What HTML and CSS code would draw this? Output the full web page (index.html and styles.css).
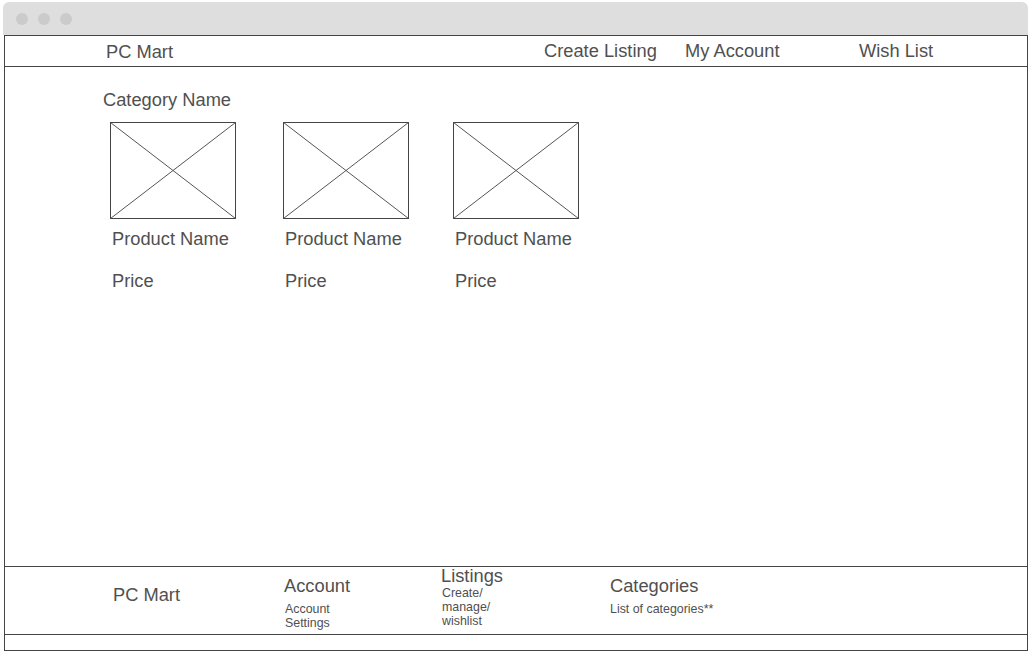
FILE: index.html
```html
<!DOCTYPE html>
<html lang="en">

<head>
    <meta charset="UTF-8">
    <meta name="viewport" content="width=device-width, initial-scale=1.0">
    <title>PC Mart</title>
    <link rel="stylesheet" href="styles.css">
</head>

<body>
    <div class="window">
        <div class="chrome">
            <span class="dot"></span>
            <span class="dot"></span>
            <span class="dot"></span>
        </div>
        <div class="frame">
            <div class="header">
                <a href="JavaScript:" class="logo">PC Mart</a>
                <div class="nav">
                    <a href="JavaScript:" class="nav_create">Create Listing</a>
                    <a href="JavaScript:" class="nav_account">My Account</a>
                    <a href="JavaScript:" class="nav_wish">Wish List</a>
                </div>
            </div>

            <div class="main">
                <h2 class="cat_name">Category Name</h2>
                <div class="products">
                    <div class="product">
                        <svg class="pic" width="126" height="97" viewBox="0 0 126 97">
                            <rect x="0.5" y="0.5" width="125" height="96" />
                            <line x1="0.5" y1="0.5" x2="125.5" y2="96.5" />
                            <line x1="125.5" y1="0.5" x2="0.5" y2="96.5" />
                        </svg>
                        <p class="p_name">Product Name</p>
                        <p class="p_price">Price</p>
                    </div>
                    <div class="product">
                        <svg class="pic" width="126" height="97" viewBox="0 0 126 97">
                            <rect x="0.5" y="0.5" width="125" height="96" />
                            <line x1="0.5" y1="0.5" x2="125.5" y2="96.5" />
                            <line x1="125.5" y1="0.5" x2="0.5" y2="96.5" />
                        </svg>
                        <p class="p_name">Product Name</p>
                        <p class="p_price">Price</p>
                    </div>
                    <div class="product">
                        <svg class="pic" width="126" height="97" viewBox="0 0 126 97">
                            <rect x="0.5" y="0.5" width="125" height="96" />
                            <line x1="0.5" y1="0.5" x2="125.5" y2="96.5" />
                            <line x1="125.5" y1="0.5" x2="0.5" y2="96.5" />
                        </svg>
                        <p class="p_name">Product Name</p>
                        <p class="p_price">Price</p>
                    </div>
                </div>
            </div>

            <div class="footer">
                <div class="f_logo">PC Mart</div>
                <div class="f_col f_account">
                    <h3>Account</h3>
                    <p class="f_note">Account Settings</p>
                </div>
                <div class="f_col f_listings">
                    <h3>Listings</h3>
                    <p class="f_note">Create/ manage/ wishlist</p>
                </div>
                <div class="f_col f_categories">
                    <h3>Categories</h3>
                    <p class="f_note">List of categories**</p>
                </div>
            </div>
            <div class="bottom_space"></div>
        </div>
    </div>
</body>

</html>
```

FILE: styles.css
```css
* {
    margin: 0;
    padding: 0;
    box-sizing: border-box;
}

body {
    background-color: #fff;
    font-family: "Liberation Sans", Arial, sans-serif;
    color: #505050;
}

a {
    text-decoration: none;
    color: #505050;
}

.window {
    margin: 2px 0 0 3px;
    width: 1025px;
}

/* browser title bar */
.chrome {
    display: flex;
    align-items: center;
    gap: 10px;
    height: 33px;
    padding: 0 0 0 13px;
    border-radius: 6px 6px 0 0;
    background-color: #dedede;
}

.chrome .dot {
    display: block;
    width: 12px;
    height: 12px;
    border-radius: 50%;
    background-color: #cbcbcb;
}

.frame {
    display: flex;
    flex-direction: column;
    margin-left: 1px;
    height: 616px;
    border: 1px solid #444;
    background-color: #fff;
}

/* top navigation */
.header {
    display: flex;
    height: 31px;
    padding-left: 101px;
    border-bottom: 1px solid #444;
    font-size: 18.3px;
    line-height: 20px;
}

.header .logo {
    display: block;
    width: 438px;
    padding-top: 6px;
}

.header .nav {
    display: flex;
    padding-top: 5px;
}

.nav_create {
    width: 141px;
}

.nav_account {
    width: 174px;
}

/* product listing */
.main {
    flex: 1;
}

.cat_name {
    margin: 23px 0 0 98px;
    font-size: 18.3px;
    font-weight: normal;
    line-height: 20px;
}

.products {
    display: grid;
    grid-template-columns: 173px 170px 126px;
    margin: 12px 0 0 105px;
}

.product .pic {
    display: block;
}

.product .pic rect,
.product .pic line {
    fill: none;
    stroke: #444;
    stroke-width: 1;
}

.product .pic line {
    stroke: #555;
}

.p_name {
    margin-top: 10px;
    padding-left: 2px;
    font-size: 18.3px;
    line-height: 20px;
}

.p_price {
    margin-top: 22px;
    padding-left: 2px;
    font-size: 18.3px;
    line-height: 20px;
}

/* footer */
.footer {
    display: flex;
    height: 69px;
    padding-left: 108px;
    border-top: 1px solid #444;
    border-bottom: 1px solid #444;
}

.f_logo {
    width: 171px;
    padding-top: 18px;
    font-size: 18.3px;
    line-height: 20px;
}

.f_col {
    padding-top: 9px;
}

.f_col h3 {
    font-size: 18.3px;
    font-weight: normal;
    line-height: 20px;
}

.f_note {
    margin-top: 6px;
    font-size: 12.4px;
    line-height: 14px;
}

.f_account {
    width: 157px;
}

.f_account .f_note {
    width: 60px;
    margin-left: 1px;
}

.f_listings {
    width: 169px;
    padding-top: 0;
}

.f_listings h3 {
    line-height: 18px;
}

.f_listings .f_note {
    width: 60px;
    margin: 1px 0 0 1px;
}

.bottom_space {
    height: 15px;
}
```
